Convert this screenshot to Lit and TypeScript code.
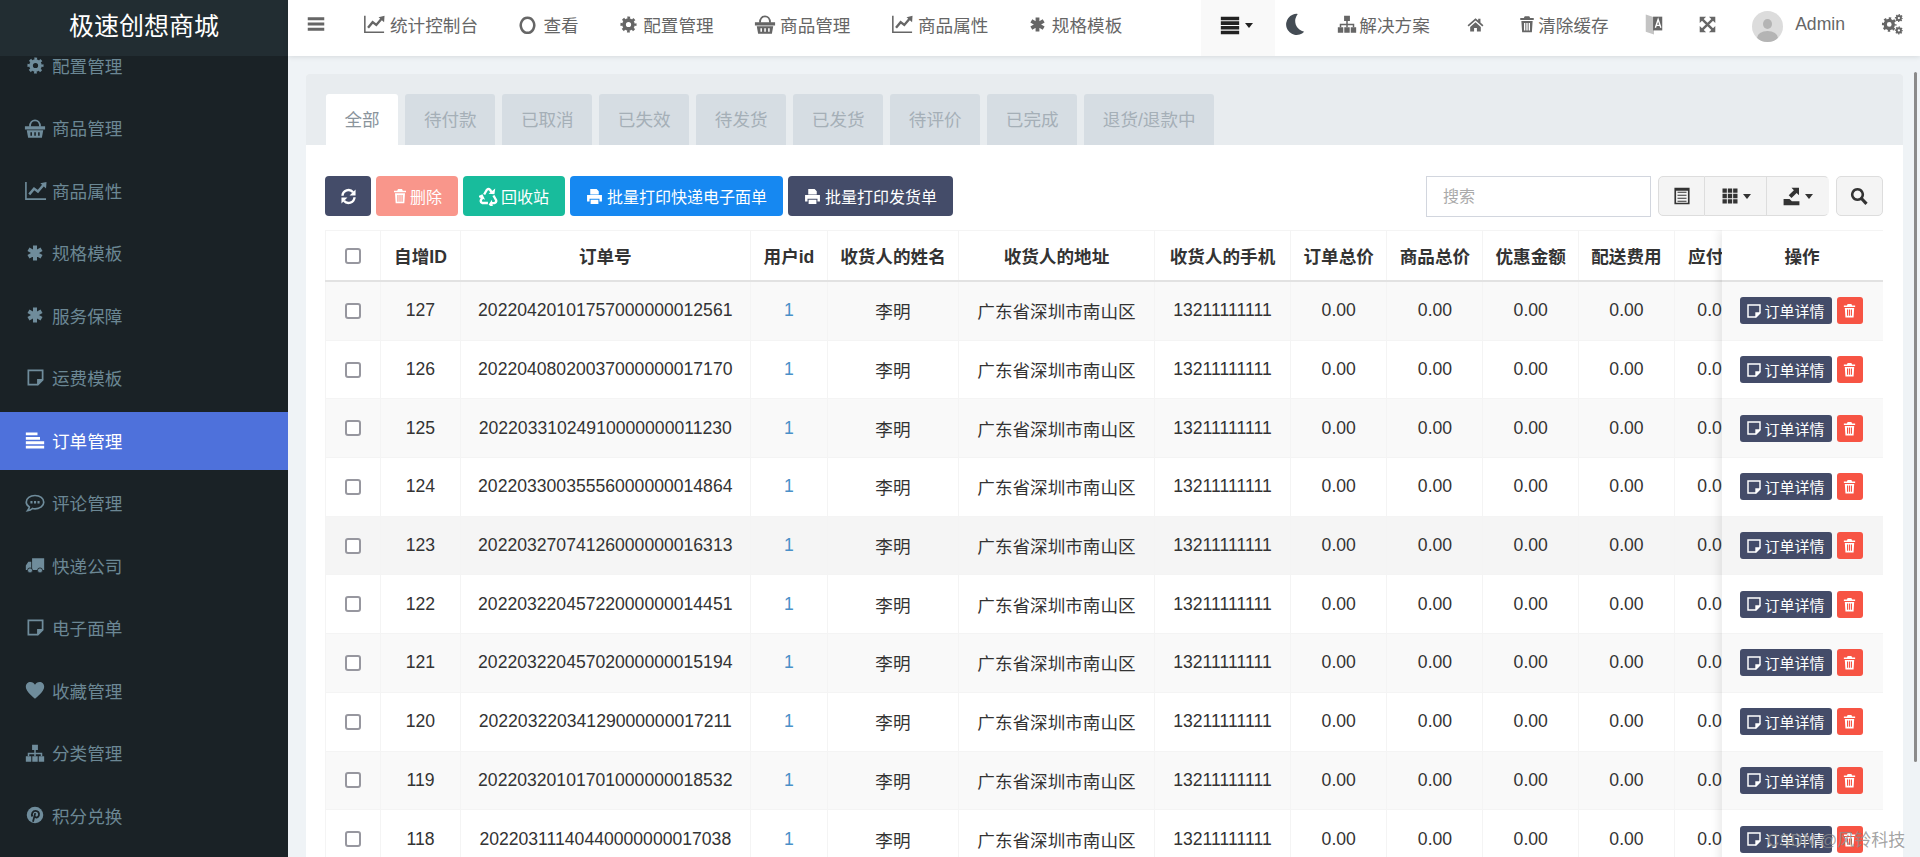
import { LitElement, html, css, svg } from "lit";
import { customElement } from "lit/decorators.js";

const gear = (cx: number, cy: number, r: number, w: number) => {
  const teeth = r + w * 0.62;
  const c = 2 * Math.PI * teeth;
  const d = c / 16;
  return svg`<circle cx=${cx} cy=${cy} r=${r} fill="none" stroke="currentColor" stroke-width=${w}></circle>
  <circle cx=${cx} cy=${cy} r=${teeth} fill="none" stroke="currentColor" stroke-width=${w * 0.75} stroke-dasharray="${d} ${d}" stroke-dashoffset=${d / 2}></circle>`;
};

const line = (d: string, w = 2) =>
  svg`<path d=${d} fill="none" stroke="currentColor" stroke-width=${w}></path>`;
const fill = (d: string) =>
  svg`<path d=${d} fill="currentColor" fill-rule="evenodd"></path>`;

const ICONS: Record<string, unknown> = {
  bars: fill("M1 3h22v4H1z M1 10h22v4H1z M1 17h22v4H1z"),
  chart: svg`${line("M2 3v18h21", 1.7)}${line("M5.500 16l5-6 4 3 6-7", 2.6)}${fill("M23.500 3l-.5 7-6-5.500z")}`,
  circle: line("M12 3.500a8.500 9.500 0 1 0 .01 0z", 3.2),
  gear: gear(12, 12, 5.6, 4.6),
  basket: svg`${line("M6.500 10.500C6.500 1.500 17.500 1.500 17.500 10.500", 2)}${fill("M1 10h22v3.500H1z M3 14.500h18l-1.500 8h-15z M7 16.500v4h1.700v-4z M11.200 16.500v4h1.700v-4z M15.400 16.500v4h1.700v-4z")}`,
  asterisk: line("M12 2v20 M3.300 7l17.400 10 M20.700 7L3.300 17", 5.4),
  tasks: fill("M1 2h22v4.300H1z M1 7.600h22v4.300H1z M1 13.200h22v4.300H1z M1 18.800h22v4.200H1z"),
  moon: fill("M15 1A11.500 11.500 0 1 0 22 20.500A12 12 0 0 1 15 1z"),
  sitemap: svg`${fill("M8.500 2h7v6.500h-7z M1 16h6.500v6.500H1z M8.750 16h6.500v6.500h-6.500z M16.500 16H23v6.500h-6.500z")}${line("M12 8v8 M4.200 16v-3.500h15.600V16", 1.8)}`,
  home: fill("M12 3L.8 13l1.500 1.700L12 6.200l9.700 8.500L23.200 13 19 9.300V4h-3.200v2.500z M4.500 15.500L12 8.800l7.500 6.700V22h-5.500v-5h-4v5H4.500z"),
  trash: fill("M9 1.500h6l1.200 2.500H21v2.500H3V4h4.800z M4.500 8h15l-1 15h-13z M8 10.500v10h1.800v-10z M11.100 10.500v10h1.800v-10z M14.200 10.500v10H16v-10z"),
  translate: svg`<path d="M3 1.500l9 3v19l-9-3z" fill="#c4c4c4"></path><path d="M11 4h10v15H11z" fill="#666"></path><path d="M13.500 16l3-9 3 9 M14.500 13.500h4" fill="none" stroke="#fff" stroke-width="1.500"></path>`,
  expand: svg`${fill("M1 1h9L1 10z M23 1h-9l9 9z M1 23h9l-9-9z M23 23h-9l9-9z")}${line("M5 5l14 14 M19 5L5 19", 3.4)}`,
  gears: svg`${gear(9, 12.500, 4.4, 3.6)}${gear(19.500, 5.500, 2.300, 2.100)}${gear(19.500, 19, 2.300, 2.100)}`,
  refresh: svg`${line("M3.500 11a8.500 8.500 0 0 1 15-5", 3.4)}${fill("M22 2v8.500h-8.500z")}${line("M20.500 13a8.500 8.500 0 0 1-15 5", 3.4)}${fill("M2 22v-8.500h8.500z")}`,
  recycle: svg`${[0, 120, 240].map(
    (a) => svg`<g transform="rotate(${a} 12 13.500)">${line("M6.500 9.500l3.500-6q2-2 4 0l1.800 3", 3)}${fill("M12 8.500l7.500.5 1-7z")}</g>`
  )}`,
  print: fill("M6 1.500h9l3 3V9H6z M1.500 10h21v9H19v-4H5v4H1.500z M6.500 16.500h11v6h-11z"),
  note: svg`${line("M3 3h18v12l-6 6H3z", 2.2)}${fill("M14 14h8l-8 8z")}`,
  list: fill("M1 3h14v3.400H1z M1 8.300h17v3.400H1z M1 13.600h22V17H1z M1 18.900h22v3.400H1z"),
  comment: svg`${line("M12 3c6 0 10.500 3.600 10.500 8s-4.500 8-10.500 8c-1 0-2-.1-3-.4-1.500 1.400-3.500 2.400-6 2.700 1-1.300 2-2.900 2.200-4.600C3 15.200 1.500 13.200 1.500 11c0-4.400 4.500-8 10.500-8z", 2)}${fill("M6.500 9.500h2.500v3H6.500z M10.800 9.500h2.500v3h-2.500z M15 9.500h2.500v3H15z")}`,
  truck: svg`${fill("M8.500 4H23v14H8.500z M7.500 8H4L1 12.500V18h6.500z")}<circle cx="6" cy="18.500" r="3" fill="currentColor" stroke="#1a2226" stroke-width="1"></circle><circle cx="18" cy="18.500" r="3" fill="currentColor" stroke="#1a2226" stroke-width="1"></circle>`,
  heart: fill("M12 22.500C5 16.500 1 12.500 1 7.800 1 4.700 3.500 2.300 6.500 2.300 9 2.300 11 3.700 12 5.700 13 3.700 15 2.300 17.500 2.300 20.500 2.300 23 4.700 23 7.800 23 12.500 19 16.500 12 22.500z"),
  pinterest: svg`<circle cx="12" cy="12" r="11" fill="currentColor"></circle><path d="M9.300 21l3-11.500 M8.500 14c-1.800-3.500.5-7.500 4.200-7.500 3.300 0 5.300 2.300 4.500 5.800-.7 3-3.800 4.200-5.500 1.700" fill="none" stroke="#1a2226" stroke-width="2.400"></path>`,
  search: svg`${line("M10 3a7 7 0 1 0 .01 0z", 3.4)}${line("M15 15l7 7.500", 4.200)}`,
  listalt: svg`${line("M3 2h18v20H3z", 2.200)}${line("M6 7h12 M6 11h12 M6 15h12 M6 19h12", 1.600)}${fill("M3 2h18v3H3z")}`,
  th: fill("M2 2h5.800v5.800H2z M9.100 2h5.800v5.800H9.100z M16.200 2H22v5.800h-5.800z M2 9.100h5.800v5.800H2z M9.100 9.100h5.800v5.800H9.100z M16.200 9.100H22v5.800h-5.800z M2 16.200h5.800V22H2z M9.100 16.200h5.800V22H9.100z M16.200 16.200H22V22h-5.800z"),
  export: svg`${fill("M2 15h7.500l3 3h9.500v5H2z M12 1h9.500v9.500l-3-3-6.500 6.500-3.500-3.500 6.500-6.500z")}`,
};

const ic = (name: string, size: string) =>
  html`<svg class="icon ${size}" viewBox="0 0 24 24" aria-hidden="true">${ICONS[name]}</svg>`;

const MENU: [string, string, string][] = [
  ["gear", "配置管理", "i19"],
  ["basket", "商品管理", "i22"],
  ["chart", "商品属性", "i23"],
  ["asterisk", "规格模板", "i18"],
  ["asterisk", "服务保障", "i18"],
  ["note", "运费模板", "i19"],
  ["list", "订单管理", "i20"],
  ["comment", "评论管理", "i20"],
  ["truck", "快递公司", "i20"],
  ["note", "电子面单", "i19"],
  ["heart", "收藏管理", "i20"],
  ["sitemap", "分类管理", "i20"],
  ["pinterest", "积分兑换", "i18"],
];

const NAV: [string, string, string, string][] = [
  ["chart", "统计控制台", "i22", "g5"],
  ["circle", "查看", "i19", "g6"],
  ["gear", "配置管理", "i19", "g5"],
  ["basket", "商品管理", "i22", "g4"],
  ["chart", "商品属性", "i22", "g5"],
  ["asterisk", "规格模板", "i17", "g6"],
];

const TABS = ["全部", "待付款", "已取消", "已失效", "待发货", "已发货", "待评价", "已完成", "退货/退款中"];

const HEAD = ["自增ID", "订单号", "用户id", "收货人的姓名", "收货人的地址", "收货人的手机", "订单总价", "商品总价", "优惠金额", "配送费用", "应付款", ""];

const ROWS: [number, string][] = [
  [127, "20220420101757000000012561"],
  [126, "20220408020037000000017170"],
  [125, "20220331024910000000011230"],
  [124, "20220330035556000000014864"],
  [123, "20220327074126000000016313"],
  [122, "20220322045722000000014451"],
  [121, "20220322045702000000015194"],
  [120, "20220322034129000000017211"],
  [119, "20220320101701000000018532"],
  [118, "20220311140440000000017038"],
];

@customElement("app-root")
export class AppRoot extends LitElement {
  static styles = css`
    :host {
      display: block;
      height: 857px;
      overflow: hidden;
      position: relative;
      font-family: "Liberation Sans", "Noto Sans CJK SC", sans-serif;
      font-size: 17.6px;
      color: #333;
      background: #eff3f6;
    }
    .icon { display: block; flex: none; }
    .i15 { width: 15px; height: 15px; }
    .i16 { width: 16px; height: 16px; }
    .i17 { width: 17px; height: 17px; }
    .i18 { width: 18px; height: 18px; }
    .i19 { width: 19px; height: 19px; }
    .i20 { width: 20px; height: 20px; }
    .i21 { width: 21px; height: 21px; }
    .i22 { width: 22px; height: 22px; }
    .i23 { width: 23px; height: 23px; }
    .layout { display: flex; height: 857px; }

    .side { width: 288px; flex: none; background: #1a2226; display: flex; flex-direction: column; overflow: hidden; }
    .brand {
      height: 56px; flex: none; background: #222d32; color: #fff; font-size: 25px;
      display: flex; align-items: center; justify-content: center; padding-bottom: 8px; box-sizing: border-box;
      position: relative; z-index: 1;
    }
    .menu { flex: 1; overflow: hidden; }
    .menu-inner { display: flex; flex-direction: column; gap: 4.5px; margin-top: -19px; }
    .mi { height: 58px; flex: none; display: flex; align-items: center; color: #6b8794; padding-bottom: 2px; box-sizing: border-box; }
    .mi .box { width: 24px; margin-left: 23px; margin-right: 5px; display: flex; justify-content: center; color: #6f8c9b; }
    .mi.on { background: #4e71db; color: #fff; }
    .mi.on .box { color: #fff; }

    .main { flex: 1; min-width: 0; display: flex; flex-direction: column; }
    .top {
      height: 56px; flex: none; background: #fff; display: flex; align-items: center; padding: 0 17px 0 19px;
      box-shadow: 0 1px 5px rgba(0, 0, 0, 0.1); color: #666; position: relative; z-index: 2; box-sizing: border-box;
    }
    .left { display: flex; align-items: center; gap: 40.500px; height: 100%; padding-bottom: 8px; box-sizing: border-box; }
    .burger { margin-right: -2.500px; }
    .right { display: flex; align-items: center; gap: 36px; height: 100%; margin-left: auto; }
    .nav { display: flex; align-items: center; white-space: nowrap; }
    .right .nav { padding-bottom: 8px; }
    .g2 { gap: 2px; } .g3 { gap: 3px; } .g4 { gap: 4px; } .g5 { gap: 5px; } .g6 { gap: 6px; }
    .pull2 { margin-left: -2px; }
    .pull1 { margin-left: -1.500px; }
    .push1 { margin-left: 1px; }
    .stack {
      align-self: stretch; width: 74px; background: #f9f9f9; color: #222; margin-right: -27px;
      display: flex; align-items: center; gap: 5px; padding: 0 0 6px 19px; box-sizing: border-box;
    }
    .caret { width: 0; height: 0; border-left: 4.500px solid transparent; border-right: 4.500px solid transparent; border-top: 5px solid currentColor; flex: none; }
    .moon { color: #444c54; margin-right: -5px; padding-bottom: 8px; }
    .avatar {
      width: 31px; height: 31px; border-radius: 50%; background: #dcdcdc; overflow: hidden; position: relative; flex: none; margin-bottom: 3px;
    }
    .avatar::before { content: ""; position: absolute; left: 11px; top: 8px; width: 9px; height: 10px; border-radius: 50%; background: #b4b4b4; }
    .avatar::after { content: ""; position: absolute; left: 5px; top: 20px; width: 21px; height: 14px; border-radius: 50%; background: #b4b4b4; }
    .user { display: flex; align-items: center; gap: 12px; height: 100%; }

    .content { flex: 1; min-height: 0; padding: 18px 17.500px 0 18px; }
    .card { height: 100%; border-radius: 3px 3px 0 0; background: #fff; }
    .tabs { height: 71px; background: #e8ecef; padding: 20px 0 0 20px; display: flex; gap: 7.200px; box-sizing: border-box; border-radius: 3px 3px 0 0; }
    .tab {
      height: 51px; padding: 0 18.500px; background: #d6dde3; color: #a5afb7; border-radius: 3px 3px 0 0;
      display: flex; align-items: center; padding-bottom: 2px; box-sizing: border-box; white-space: nowrap;
    }
    .tab.on { background: #fff; color: #8a949c; }
    .body { padding: 31px 20px 0 19px; }
    .bar { display: flex; align-items: flex-start; gap: 5px; height: 40px; }
    .btn {
      height: 40px; padding: 0 16px; border-radius: 4px; color: #fff; font-size: 16px;
      display: flex; align-items: center; box-sizing: border-box; white-space: nowrap; flex: none;
    }
    .btn.ico { width: 46px; padding: 0; justify-content: center; }
    .dark { background: #444c69; }
    .del { background: #f9968b; }
    .rec { background: #18bc9c; }
    .blue { background: #1688f1; }
    .grow { flex: 1; }
    .search {
      width: 225px; height: 41px; border: 1px solid #d2d6de; box-sizing: border-box; padding: 0 16px; font: inherit; font-size: 16px; outline: none; margin-right: 2px;
    }
    .search::placeholder { color: #aaa; }
    .group { display: flex; margin-right: 1.500px; }
    .gb {
      height: 40px; background: #f4f4f4; border: 1px solid #ddd; box-sizing: border-box; display: flex; align-items: center; justify-content: center; gap: 4px; color: #333;
    }
    .gb + .gb { border-left: 0; }
    .gb.a { width: 47px; border-radius: 5px 0 0 5px; }
    .gb.b { width: 62px; }
    .gb.c { width: 62px; border-radius: 0 5px 5px 0; }
    .gb.d { width: 47px; border-radius: 5px; }

    .tw { margin-top: 14px; position: relative; overflow: hidden; height: 640px; }
    .row { display: grid; grid-template-columns: 56.400px 79.200px 290.400px 77px 131px 196px 136px 96.500px 96px 95.500px 96px 80px 126.500px; height: 58.700px; box-sizing: border-box; border-bottom: 1px solid #f4f4f4; }
    .row.h { height: 52px; border-bottom: 2px solid #e2e2e2; border-top: 1px solid #f4f4f4; font-weight: 700; color: #333; background: #fff; }
    .row.s { background: #f9f9f9; }
    .row.hv { background: #f5f5f5; }
    .c { display: flex; align-items: center; justify-content: center; border-right: 1px solid #f4f4f4; white-space: nowrap; overflow: hidden; min-width: 0; }
    .c:first-child { border-left: 1px solid #f4f4f4; }
    .cb { width: 16px; height: 16px; border: 2px solid #97979f; border-radius: 3px; box-sizing: border-box; background: #fff; }
    .link { color: #4a90c8; }

    .fixed { position: absolute; top: 0; right: 0; width: 161px; background: #fff; box-shadow: -2px 0 10px rgba(0, 0, 0, 0.1); z-index: 1; }
    .fr { height: 58.700px; box-sizing: border-box; border-bottom: 1px solid #f4f4f4; display: flex; align-items: center; justify-content: center; gap: 5px; padding-right: 2px; }
    .fr.h { height: 52px; border-bottom: 2px solid #e2e2e2; border-top: 1px solid #f4f4f4; font-weight: 700; padding-right: 0; background: #fff; }
    .fr.s { background: #f9f9f9; }
    .fr.hv { background: #f5f5f5; }
    .act { height: 27px; border-radius: 3px; color: #fff; display: flex; align-items: center; font-size: 15px; box-sizing: border-box; flex: none; }
    .act.det { width: 92px; background: #444c69; padding-left: 6.500px; gap: 2.500px; }
    .act.rm { width: 26px; background: #f75444; justify-content: center; }

    .thumb { position: absolute; left: 1914px; top: 72px; width: 3px; height: 690px; border-radius: 2px; background: #8a8a8a; z-index: 3; }
    .mark { position: absolute; left: 1767px; top: 826px; color: rgba(140, 140, 140, 0.8); font-size: 17px; white-space: nowrap; z-index: 4; }
  `;

  render() {
    return html`
      <div class="layout">
        <aside class="side">
          <div class="brand">极速创想商城</div>
          <div class="menu"><div class="menu-inner">
            ${MENU.map(
              ([i, t, s]) => html`<div class="mi ${t === "订单管理" ? "on" : ""}">
                <span class="box">${ic(i, s)}</span>${t}
              </div>`
            )}
          </div></div>
        </aside>
        <div class="main">
          <header class="top">
            <div class="left">
              <span class="burger">${ic("bars", "i18")}</span>
              ${NAV.map(([i, t, size, g]) => html`<div class="nav ${g}">${ic(i, size)}${t}</div>`)}
            </div>
            <div class="right">
              <div class="stack">${ic("tasks", "i20")}<span class="caret"></span></div>
              <div class="moon">${ic("moon", "i22")}</div>
              <div class="nav g2">${ic("sitemap", "i20")}解决方案</div>
              <div class="nav push1">${ic("home", "i17")}</div>
              <div class="nav g2 pull1">${ic("trash", "i18")}清除缓存</div>
              <div class="nav pull1">${ic("translate", "i22")}</div>
              <div class="nav pull2">${ic("expand", "i17")}</div>
              <div class="user"><span class="avatar"></span><span class="nav">Admin</span></div>
              <div class="nav">${ic("gears", "i22")}</div>
            </div>
          </header>
          <div class="content">
            <section class="card">
              <div class="tabs">
                ${TABS.map((t, i) => html`<div class="tab ${i === 0 ? "on" : ""}">${t}</div>`)}
              </div>
              <div class="body">
                <div class="bar">
                  <div class="btn dark ico">${ic("refresh", "i17")}</div>
                  <div class="btn del g2">${ic("trash", "i16")}删除</div>
                  <div class="btn rec g3">${ic("recycle", "i19")}回收站</div>
                  <div class="btn blue g4">${ic("print", "i17")}批量打印快递电子面单</div>
                  <div class="btn dark g4">${ic("print", "i17")}批量打印发货单</div>
                  <span class="grow"></span>
                  <input class="search" placeholder="搜索" />
                  <div class="group">
                    <div class="gb a">${ic("listalt", "i18")}</div>
                    <div class="gb b">${ic("th", "i18")}<span class="caret"></span></div>
                    <div class="gb c">${ic("export", "i19")}<span class="caret"></span></div>
                  </div>
                  <div class="gb d">${ic("search", "i18")}</div>
                </div>
                <div class="tw">
                  <div class="row h">
                    <div class="c"><span class="cb"></span></div>
                    ${HEAD.map((h) => html`<div class="c">${h}</div>`)}
                  </div>
                  ${ROWS.map(
                    ([id, no], i) => html`<div class="row ${i === 4 ? "hv" : i % 2 === 0 ? "s" : ""}">
                      <div class="c"><span class="cb"></span></div>
                      <div class="c">${id}</div>
                      <div class="c">${no}</div>
                      <div class="c link">1</div>
                      <div class="c">李明</div>
                      <div class="c">广东省深圳市南山区</div>
                      <div class="c">13211111111</div>
                      <div class="c">0.00</div>
                      <div class="c">0.00</div>
                      <div class="c">0.00</div>
                      <div class="c">0.00</div>
                      <div class="c">0.00</div>
                      <div class="c"></div>
                    </div>`
                  )}
                  <div class="fixed">
                    <div class="fr h">操作</div>
                    ${ROWS.map(
                      (_, i) => html`<div class="fr ${i === 4 ? "hv" : i % 2 === 0 ? "s" : ""}">
                        <div class="act det">${ic("note", "i16")}订单详情</div>
                        <div class="act rm">${ic("trash", "i15")}</div>
                      </div>`
                    )}
                  </div>
                </div>
              </div>
            </section>
          </div>
        </div>
      </div>
      <div class="thumb"></div>
      <div class="mark">CSDN @风铃科技</div>
    `;
  }
}
